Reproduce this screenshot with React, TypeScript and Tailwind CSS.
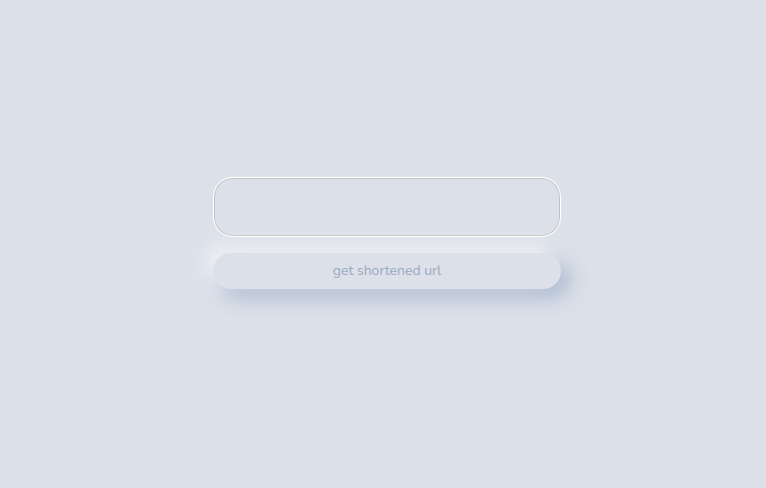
export default function App() {
  return (
    <main className="flex min-h-screen items-center justify-center bg-[#dbe0e9] pb-[22px] pl-2 font-['Nunito','Noto_Sans',sans-serif]">
      <form className="flex w-full max-w-[348px] flex-col gap-4" onSubmit={(e) => e.preventDefault()}>
        <input
          type="text"
          aria-label="Url"
          className="h-15 w-full rounded-[20px] border border-white bg-transparent px-5 text-sm text-[#9aaabf] shadow-[inset_0_0_0_1px_#c2c2c2,0_0_1px_0_#ffffff] outline-none"
        />
        <button
          type="submit"
          className="h-9 w-full rounded-full bg-[#dbe0e9] text-sm text-[#9aaabf] shadow-[-8px_-8px_20px_0_#f0f1f3,8px_8px_20px_0_#a9b7ce]"
        >
          get shortened url
        </button>
      </form>
    </main>
  );
}
